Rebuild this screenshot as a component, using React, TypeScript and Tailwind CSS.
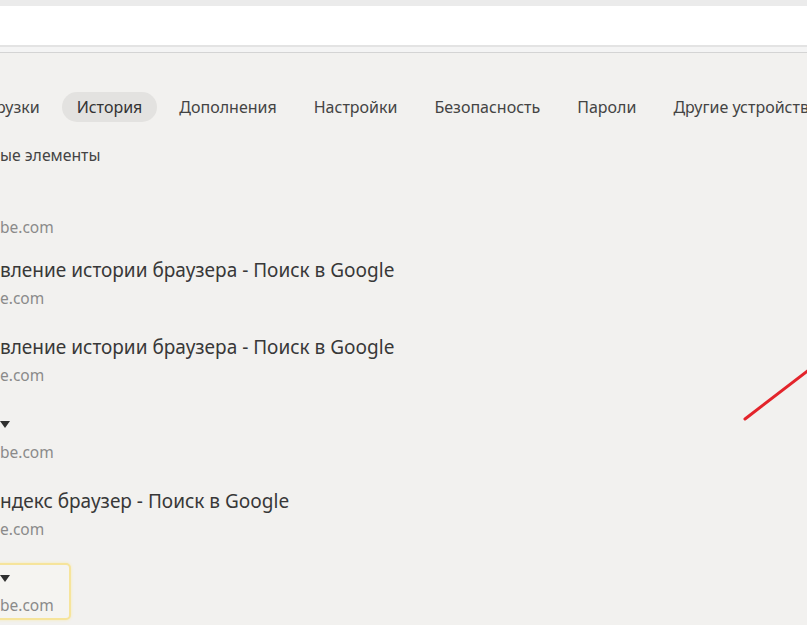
const tabs = ["Дополнения", "Настройки", "Безопасность", "Пароли", "Другие устройства"];

function Caret() {
  return (
    <svg width="10" height="7" viewBox="0 0 10 7" className="block">
      <polygon points="0,0 10,0 5,7" fill="#2f2f2f" />
    </svg>
  );
}

export default function App() {
  return (
    <div
      className="relative w-[807px] h-[625px] overflow-hidden bg-[#f2f1ef]"
      style={{ fontFamily: '"Noto Sans", "Open Sans", sans-serif' }}
    >
      {/* address bar */}
      <div className="h-[6px] bg-[#ebebeb]" />
      <div className="h-[39px] bg-white" />
      <div className="h-[2px] bg-[#e3e3e3]" />
      <div className="h-[5px] bg-[#f4f4f4]" />
      <div className="h-[1px] bg-[#d4d4d4]" />

      {/* tabs */}
      <div className="mt-[39px] flex h-[30px] items-center gap-[7px] whitespace-nowrap text-[16px] text-[#444]">
        <span className="ml-[-4px] pr-[15px]">рузки</span>
        <span className="flex h-[30px] items-center rounded-full bg-[#e3e2e0] px-[15px] text-[#333]">История</span>
        {tabs.map((t) => (
          <span key={t} className="px-[15px]">
            {t}
          </span>
        ))}
      </div>

      <div className="mt-[23px] h-[20px] text-[15.8px] leading-[20px] text-[#444]">ые элементы</div>

      {/* history list */}
      <div className="mt-[48px] text-[15.5px] leading-[28px] text-[#8a8a8a]">be.com</div>

      <div className="mt-[15px] flex flex-col gap-[21px]">
        <div>
          <div className="h-[28px] text-[19px] leading-[28px] text-[#383838]">вление истории браузера - Поиск в Google</div>
          <div className="h-[28px] text-[15.5px] leading-[28px] text-[#8a8a8a]">e.com</div>
        </div>
        <div>
          <div className="h-[28px] text-[19px] leading-[28px] text-[#383838]">вление истории браузера - Поиск в Google</div>
          <div className="h-[28px] text-[15.5px] leading-[28px] text-[#8a8a8a]">e.com</div>
        </div>
        <div>
          <div className="flex h-[28px] items-center">
            <Caret />
          </div>
          <div className="h-[28px] text-[15.5px] leading-[28px] text-[#8a8a8a]">be.com</div>
        </div>
        <div>
          <div className="h-[28px] text-[19px] leading-[28px] text-[#383838]">ндекс браузер - Поиск в Google</div>
          <div className="h-[28px] text-[15.5px] leading-[28px] text-[#8a8a8a]">e.com</div>
        </div>
        <div className="ml-[-40px] mt-[-1px] w-[111px] rounded-[5px] border-2 border-[#f6e49b] bg-[#f5f4f1] pl-[38px] shadow-[0_0_3px_#f8eab0]">
          <div className="flex h-[27px] items-center">
            <Caret />
          </div>
          <div className="h-[26px] text-[15.5px] leading-[26px] text-[#8a8a8a]">be.com</div>
        </div>
      </div>

      {/* annotation arrow */}
      <svg className="absolute left-0 top-0" width="807" height="625">
        <line x1="745" y1="419" x2="810" y2="369" stroke="#e3242b" strokeWidth="3" strokeLinecap="round" />
      </svg>
    </div>
  );
}
